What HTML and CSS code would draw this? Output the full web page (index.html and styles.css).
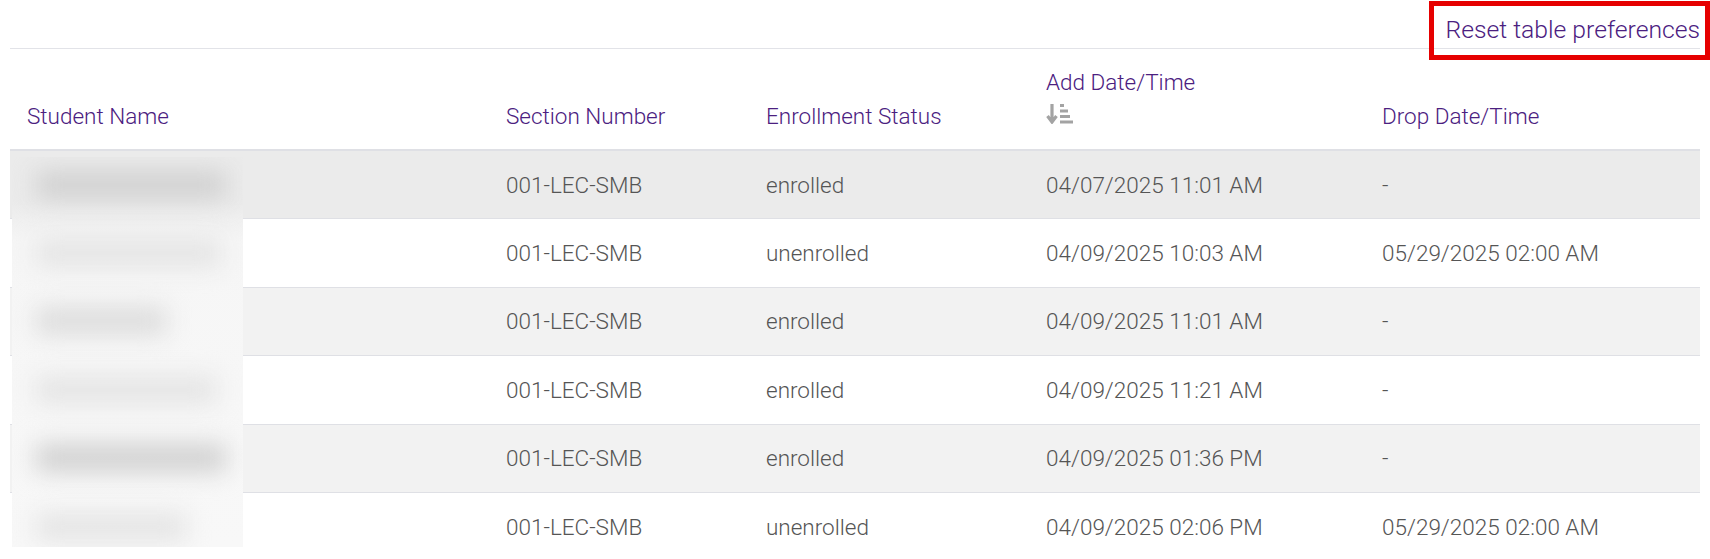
FILE: index.html
```html
<!DOCTYPE html>
<html lang="en">
<head>
  <meta charset="UTF-8" />
  <title>Enrollment</title>
  <link rel="stylesheet" href="styles.css">
</head>
<body>
  <div class="toolbar">
    <a class="reset-link" href="#">Reset table preferences</a>
    <span class="highlight"></span>
  </div>
  <div class="table-wrap">
    <table class="roster">
      <colgroup>
        <col class="col-name"><col class="col-section"><col class="col-status"><col class="col-add"><col class="col-drop">
      </colgroup>
      <thead>
        <tr>
          <th>Student Name</th>
          <th>Section Number</th>
          <th>Enrollment Status</th>
          <th>
            Add Date/Time
            <svg class="sort-icon" viewBox="0 0 27 21" width="27" height="21">
              <path d="M6 1v18M1.5 13l4.500 6 4.500-6" fill="none" stroke="#a3a3a3" stroke-width="3.200"/>
              <path d="M14 2.500h4M14 8h8M14 13.500h10M14 19h13" fill="none" stroke="#a3a3a3" stroke-width="2.800"/>
            </svg>
          </th>
          <th>Drop Date/Time</th>
        </tr>
      </thead>
      <tbody>
        <tr class="active"><td></td><td>001-LEC-SMB</td><td>enrolled</td><td>04/07/2025 11:01 AM</td><td>-</td></tr>
        <tr><td></td><td>001-LEC-SMB</td><td>unenrolled</td><td>04/09/2025 10:03 AM</td><td>05/29/2025 02:00 AM</td></tr>
        <tr class="odd"><td></td><td>001-LEC-SMB</td><td>enrolled</td><td>04/09/2025 11:01 AM</td><td>-</td></tr>
        <tr><td></td><td>001-LEC-SMB</td><td>enrolled</td><td>04/09/2025 11:21 AM</td><td>-</td></tr>
        <tr class="odd"><td></td><td>001-LEC-SMB</td><td>enrolled</td><td>04/09/2025 01:36 PM</td><td>-</td></tr>
        <tr><td></td><td>001-LEC-SMB</td><td>unenrolled</td><td>04/09/2025 02:06 PM</td><td>05/29/2025 02:00 AM</td></tr>
      </tbody>
    </table>
    <!-- names are blurred out in the source -->
    <div class="blur-cover">
      <div class="blur-row"><span class="smudge dark w1"></span></div>
      <div class="blur-row"><span class="smudge light w2"></span></div>
      <div class="blur-row"><span class="smudge mid w3"></span></div>
      <div class="blur-row"><span class="smudge light w4"></span></div>
      <div class="blur-row"><span class="smudge dark w5"></span></div>
      <div class="blur-row"><span class="smudge light w6"></span></div>
    </div>
  </div>
</body>
</html>
```

FILE: styles.css
```css
html, body {
  height: 100%;
}

body {
  margin: 0;
  background: #fff;
  font-family: Roboto, "Liberation Sans", sans-serif;
  font-weight: 300;
  font-size: 22.5px;
  color: #555;
  overflow: hidden;
}

.toolbar {
  position: relative;
  display: flex;
  justify-content: flex-end;
  align-items: center;
  height: 48px;
  margin: 0 10px;
  border-bottom: 1px solid #e2e3e8;
}

.reset-link {
  color: #4b2080;
  text-decoration: none;
  font-size: 24.7px;
  padding-top: 10px;
}

.highlight {
  position: absolute;
  top: 1px;
  right: -10px;
  width: 271px;
  height: 49px;
  border: 5px solid #e60000;
}

.table-wrap {
  position: relative;
  margin: 0 10px;
}

.roster {
  width: 1690px;
  border-collapse: collapse;
  table-layout: fixed;
}

.col-name { width: 479px; }
.col-section { width: 260px; }
.col-status { width: 280px; }
.col-add { width: 336px; }

.roster th {
  height: 80px;
  padding: 0 17px 20px;
  text-align: left;
  vertical-align: bottom;
  font-weight: 300;
  color: #4b2080;
  border-bottom: 2px solid #dfe0e5;
}

.sort-icon {
  display: block;
  margin-top: 8px;
  margin-bottom: 5px;
}

.roster td {
  height: 67.4px;
  padding: 0 17px;
  border-bottom: 1px solid #dfe0e5;
}

.roster tr.active td {
  background: #ebebeb;
}

.roster tr.odd td {
  background: #f2f2f2;
}

.roster tr:last-child td {
  border-bottom: none;
}

.blur-cover {
  position: absolute;
  top: 108px;
  left: 2px;
  width: 231px;
  height: 390px;
  display: grid;
  grid-template-rows: 61.5px repeat(5, 68.5px);
  background: linear-gradient(#ebebeb 0, #ebebeb 45px, #f6f6f6 85px, #f8f8f8 100%);
  overflow: hidden;
}

.blur-row {
  display: flex;
  align-items: center;
}

.blur-row:first-child .smudge {
  margin-top: -6px;
}

.smudge {
  display: block;
  height: 28px;
  margin-left: 24px;
  filter: blur(12px);
}

.smudge.dark { background: #d0d0d0; }
.smudge.mid { background: #dcdcdc; }
.smudge.light { background: #e4e4e4; }

.w1 { width: 190px; }
.w2 { width: 185px; }
.w3 { width: 130px; }
.w4 { width: 180px; }
.w5 { width: 190px; }
.w6 { width: 150px; }
```
